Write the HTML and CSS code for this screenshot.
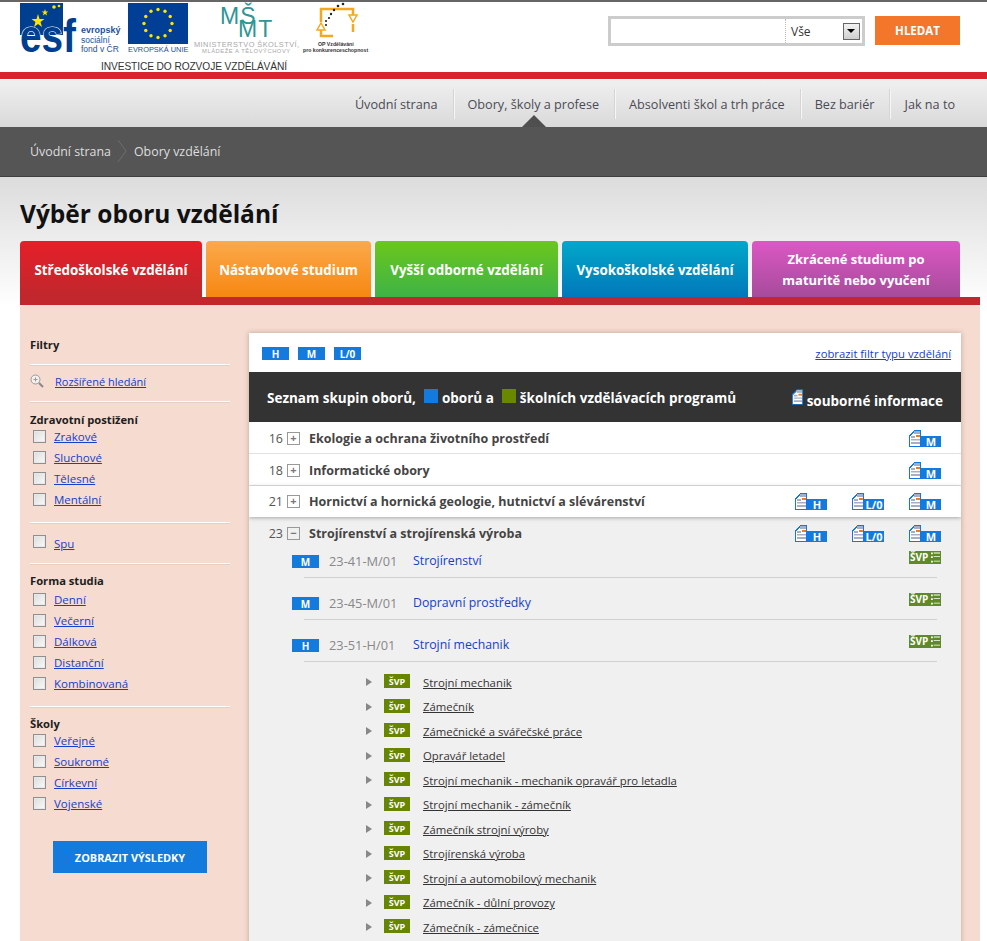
FILE: index.html
```html
<!DOCTYPE html>
<html lang="cs">
<head>
<meta charset="utf-8">
<title>Výběr oboru vzdělání</title>
<link rel="stylesheet" href="styles.css">
</head>
<body>
<svg class="defs" width="0" height="0" aria-hidden="true">
  <symbol id="doc" viewBox="0 0 12 17">
    <path d="M0 17V5h1V4h1V3h1V2h1V1h1V0h7v17z" fill="#1278dc"/>
    <path d="M1 16V6h1V5h1V4h1V3h1V1h6v15z" fill="#fff"/>
    <path d="M5 1h6v3H5z" fill="#a9afc0"/>
    <path d="M7 5h4v2H7z" fill="#f47a20"/>
    <path d="M2 6h4v2H2zM2 9h9v1.500H2zM2 12h9v2H2z" fill="#a9afc0"/>
  </symbol>
  <symbol id="lst" viewBox="0 0 10 11">
    <path d="M0 0h2v2H0zM3 0h7v1H3zM0 4h2v2H0zM3 4h7v1H3zM0 9h2v2H0zM3 9h7v1H3z" fill="#fff"/>
  </symbol>
</svg>

<header class="top">
  <svg class="logos" width="350" height="70" viewBox="20 2 350 70" role="img">
    <rect x="20" y="3" width="43" height="32" fill="#003f8f"/>
    <path d="M38 14l1.500 5 5 0-4 3 1.500 5-4-3-4 3 1.500-5-4-3 5 0z" fill="#ffe500"/>
    <path d="M45 9l.8 2.500h2.500l-2 1.500.8 2.500-2.100-1.500-2.100 1.500.8-2.500-2-1.500h2.500z" fill="#ffe500"/>
    <circle cx="54" cy="7" r="1.800" fill="#ffe500"/>
    <circle cx="59" cy="6" r="1.300" fill="#ffe500"/>
    <text class="esf" x="20" y="52" textLength="56" lengthAdjust="spacingAndGlyphs">esf</text>
    <text class="esf-t" x="81" y="33">evropský</text>
    <text class="esf-s" x="81" y="43">sociální</text>
    <text class="esf-s" x="81" y="52">fond v ČR</text>
    <rect x="128" y="3" width="60" height="41" fill="#003f95"/>
    <g fill="#ffe500">
      <circle cx="158" cy="9.500" r="1.700"/><circle cx="165" cy="11.300" r="1.700"/><circle cx="170.200" cy="16.500" r="1.700"/>
      <circle cx="172" cy="23.500" r="1.700"/><circle cx="170.200" cy="30.500" r="1.700"/><circle cx="165" cy="35.700" r="1.700"/>
      <circle cx="158" cy="37.500" r="1.700"/><circle cx="151" cy="35.700" r="1.700"/><circle cx="145.800" cy="30.500" r="1.700"/>
      <circle cx="144" cy="23.500" r="1.700"/><circle cx="145.800" cy="16.500" r="1.700"/><circle cx="151" cy="11.300" r="1.700"/>
    </g>
    <text class="eu" x="128" y="52">EVROPSKÁ UNIE</text>
    <text class="ms" x="220" y="24">MŠ</text>
    <text class="ms" x="238" y="37">MT</text>
    <text class="min" x="194" y="47">MINISTERSTVO ŠKOLSTVÍ,</text>
    <text class="min2" x="202" y="53">MLÁDEŽE A TĚLOVÝCHOVY</text>
    <path d="M321 22V9h32v6M353 24v8M333 36H321v-6" fill="none" stroke="#f5a81c" stroke-width="2.500"/>
    <path d="M349 15h8l-4 7zM317 30l4-7 4 7z" fill="#fff" stroke="#f5a81c" stroke-width="1.500"/>
    <g fill="#222">
      <circle cx="343" cy="4" r="1.300"/><circle cx="338" cy="6" r="1.300"/><circle cx="334" cy="10" r="1.200"/>
      <circle cx="331" cy="14" r="1.200"/><circle cx="329" cy="18" r="1.100"/><circle cx="326" cy="21" r="1.100"/><circle cx="326" cy="25" r="1.100"/>
    </g>
    <text class="op" x="318" y="46">OP Vzdělávání</text>
    <text class="op" x="303" y="52">pro konkurenceschopnost</text>
    <text class="inv" x="101" y="70">INVESTICE DO ROZVOJE VZDĚLÁVÁNÍ</text>
  </svg>
  <form class="search">
    <div class="search-box">
      <input class="search-input" type="text" aria-label="Hledat">
      <div class="search-select">
        <span>Vše</span>
        <span class="search-arrow"></span>
      </div>
    </div>
    <button class="search-btn" type="button">HLEDAT</button>
  </form>
</header>

<div class="redline"></div>

<nav class="nav">
  <a class="nav-item">Úvodní strana</a>
  <a class="nav-item nav-active">Obory, školy a profese</a>
  <a class="nav-item">Absolventi škol a trh práce</a>
  <a class="nav-item">Bez bariér</a>
  <a class="nav-item">Jak na to</a>
</nav>

<div class="crumbs">
  <span>Úvodní strana</span>
  <svg class="crumb-sep" width="10" height="24" viewBox="0 0 10 24"><path d="M1 1l8 11-8 11" fill="none" stroke="#6e6e6e"/></svg>
  <span>Obory vzdělání</span>
</div>

<main class="page">
  <h1 class="title">Výběr oboru vzdělání</h1>

  <div class="tabs">
    <a class="tab tab-red">Středoškolské vzdělání</a>
    <a class="tab tab-orange">Nástavbové studium</a>
    <a class="tab tab-green">Vyšší odborné vzdělání</a>
    <a class="tab tab-blue">Vysokoškolské vzdělání</a>
    <a class="tab tab-purple">Zkrácené studium po<br>maturitě nebo vyučení</a>
  </div>

  <div class="panel">
    <aside class="filters">
      <section class="f-sec f-first"><h3 class="f-h">Filtry</h3></section>
      <section class="f-sec f-search">
        <svg width="14" height="14" viewBox="0 0 14 14"><circle cx="5.500" cy="5.500" r="4.500" fill="#f5f0ec" stroke="#999"/><path d="M3.500 5.500h4M5.500 3.500v4" stroke="#999"/><path d="M9 9l4 4" stroke="#888" stroke-width="2"/></svg>
        <a class="f-link">Rozšířené hledání</a>
      </section>
      <section class="f-sec f-health">
        <h3 class="f-h">Zdravotní postižení</h3>
        <label class="f-item"><input class="cb" type="checkbox"><a class="f-link">Zrakové</a></label>
        <label class="f-item"><input class="cb" type="checkbox"><a class="f-link">Sluchové</a></label>
        <label class="f-item"><input class="cb" type="checkbox"><a class="f-link">Tělesné</a></label>
        <label class="f-item"><input class="cb" type="checkbox"><a class="f-link">Mentální</a></label>
      </section>
      <section class="f-sec f-spu">
        <label class="f-item f-item-spu"><input class="cb" type="checkbox"><a class="f-link">Spu</a></label>
      </section>
      <section class="f-sec f-form">
        <h3 class="f-h">Forma studia</h3>
        <label class="f-item"><input class="cb" type="checkbox"><a class="f-link">Denní</a></label>
        <label class="f-item"><input class="cb" type="checkbox"><a class="f-link">Večerní</a></label>
        <label class="f-item"><input class="cb" type="checkbox"><a class="f-link">Dálková</a></label>
        <label class="f-item"><input class="cb" type="checkbox"><a class="f-link">Distanční</a></label>
        <label class="f-item"><input class="cb" type="checkbox"><a class="f-link">Kombinovaná</a></label>
      </section>
      <section class="f-sec f-last">
        <h3 class="f-h">Školy</h3>
        <label class="f-item"><input class="cb" type="checkbox"><a class="f-link">Veřejné</a></label>
        <label class="f-item"><input class="cb" type="checkbox"><a class="f-link">Soukromé</a></label>
        <label class="f-item"><input class="cb" type="checkbox"><a class="f-link">Církevní</a></label>
        <label class="f-item"><input class="cb" type="checkbox"><a class="f-link">Vojenské</a></label>
      </section>
      <button class="show-btn" type="button">ZOBRAZIT VÝSLEDKY</button>
    </aside>

    <section class="card">
      <div class="card-top">
        <div class="legend">
          <span class="tag">H</span><span class="tag">M</span><span class="tag">L/0</span>
        </div>
        <a class="filter-link">zobrazit filtr typu vzdělání</a>
      </div>
      <div class="card-head">
        <div class="head-left">
          <span>Seznam skupin oborů,</span>
          <i class="sq sq-blue"></i><span>oborů a</span>
          <i class="sq sq-green"></i><span>školních vzdělávacích programů</span>
        </div>
        <div class="head-right">
          <svg class="head-doc" width="11" height="16"><use href="#doc"/></svg>
          <span>souborné informace</span>
        </div>
      </div>

      <div class="grp">
        <span class="num">16</span><span class="tog">+</span><b class="grp-t">Ekologie a ochrana životního prostředí</b>
        <div class="infos"><span class="info"><svg class="doc"><use href="#doc"/></svg><b>M</b></span></div>
      </div>
      <div class="grp">
        <span class="num">18</span><span class="tog">+</span><b class="grp-t">Informatické obory</b>
        <div class="infos"><span class="info"><svg class="doc"><use href="#doc"/></svg><b>M</b></span></div>
      </div>
      <div class="grp grp-last">
        <span class="num">21</span><span class="tog">+</span><b class="grp-t">Hornictví a hornická geologie, hutnictví a slévárenství</b>
        <div class="infos">
          <span class="info"><svg class="doc"><use href="#doc"/></svg><b>H</b></span>
          <span class="info"><svg class="doc"><use href="#doc"/></svg><b>L/0</b></span>
          <span class="info"><svg class="doc"><use href="#doc"/></svg><b>M</b></span>
        </div>
      </div>

      <div class="open">
        <div class="grp grp-open">
          <span class="num">23</span><span class="tog">−</span><b class="grp-t">Strojírenství a strojírenská výroba</b>
          <div class="infos">
            <span class="info"><svg class="doc"><use href="#doc"/></svg><b>H</b></span>
            <span class="info"><svg class="doc"><use href="#doc"/></svg><b>L/0</b></span>
            <span class="info"><svg class="doc"><use href="#doc"/></svg><b>M</b></span>
          </div>
        </div>

        <div class="obor">
          <span class="tag">M</span><span class="code">23-41-M/01</span><a class="obor-t">Strojírenství</a>
          <span class="svp-l">ŠVP<svg width="9" height="11"><use href="#lst"/></svg></span>
        </div>
        <div class="obor">
          <span class="tag">M</span><span class="code">23-45-M/01</span><a class="obor-t">Dopravní prostředky</a>
          <span class="svp-l">ŠVP<svg width="9" height="11"><use href="#lst"/></svg></span>
        </div>
        <div class="obor">
          <span class="tag">H</span><span class="code">23-51-H/01</span><a class="obor-t">Strojní mechanik</a>
          <span class="svp-l">ŠVP<svg width="9" height="11"><use href="#lst"/></svg></span>
        </div>

        <ul class="svps">
          <li class="svp"><i class="arr"></i><span class="svp-t">ŠVP</span><a class="svp-a">Strojní mechanik</a></li>
          <li class="svp"><i class="arr"></i><span class="svp-t">ŠVP</span><a class="svp-a">Zámečník</a></li>
          <li class="svp"><i class="arr"></i><span class="svp-t">ŠVP</span><a class="svp-a">Zámečnické a svářečské práce</a></li>
          <li class="svp"><i class="arr"></i><span class="svp-t">ŠVP</span><a class="svp-a">Opravář letadel</a></li>
          <li class="svp"><i class="arr"></i><span class="svp-t">ŠVP</span><a class="svp-a">Strojní mechanik - mechanik opravář pro letadla</a></li>
          <li class="svp"><i class="arr"></i><span class="svp-t">ŠVP</span><a class="svp-a">Strojní mechanik - zámečník</a></li>
          <li class="svp"><i class="arr"></i><span class="svp-t">ŠVP</span><a class="svp-a">Zámečník strojní výroby</a></li>
          <li class="svp"><i class="arr"></i><span class="svp-t">ŠVP</span><a class="svp-a">Strojírenská výroba</a></li>
          <li class="svp"><i class="arr"></i><span class="svp-t">ŠVP</span><a class="svp-a">Strojní a automobilový mechanik</a></li>
          <li class="svp"><i class="arr"></i><span class="svp-t">ŠVP</span><a class="svp-a">Zámečník - důlní provozy</a></li>
          <li class="svp"><i class="arr"></i><span class="svp-t">ŠVP</span><a class="svp-a">Zámečník - zámečnice</a></li>
        </ul>
      </div>
    </section>
  </div>
</main>
</body>
</html>
```

FILE: styles.css
```css
* { box-sizing: border-box; }
html, body { height: 100vh; overflow: hidden; }
body {
  margin: 0;
  font-family: "Open Sans", "Noto Sans", sans-serif;
  font-size: 12px;
  color: #333;
  background: #fff;
}
.defs { display: block; height: 0; }
a { text-decoration: none; }

/* header */
.top {
  height: 72px;
  border-top: 2px solid #666;
  display: flex;
  justify-content: space-between;
  padding: 0 27px 0 20px;
}
.logos { display: block; }
.logos text { font-family: "Liberation Sans", sans-serif; }
.logos .esf { font-size: 46px; font-weight: 700; fill: #003f8f; stroke: #fff; stroke-width: 1.200px; paint-order: stroke; }
.logos .esf-t { font-size: 9px; font-weight: 700; fill: #1d4f9c; }
.logos .esf-s { font-size: 8.500px; fill: #1d4f9c; }
.logos .eu { font-size: 7.400px; fill: #1d4f9c; }
.logos .ms { font-size: 23px; fill: #2f9597; letter-spacing: 1px; }
.logos .min { font-size: 7.400px; fill: #a8a8a8; letter-spacing: .45px; }
.logos .min2 { font-size: 5.800px; fill: #a8a8a8; letter-spacing: .55px; }
.logos .op { font-size: 5.200px; font-weight: 700; fill: #333; }
.logos .inv { font-size: 10.200px; fill: #333; letter-spacing: -.1px; }

.search { display: flex; gap: 10px; padding-top: 14px; height: 45px; box-sizing: content-box; }
.search-box {
  width: 257px;
  height: 30px;
  border: 3px solid #ccc;
  display: flex;
  background: #fff;
}
.search-input { width: 174px; border: 0; padding: 0; background: transparent; outline: 0; }
.search-select {
  flex: 1;
  border-left: 1px dotted #bbb;
  display: flex;
  align-items: center;
  justify-content: space-between;
  padding: 0 2px 0 5px;
  font-size: 12px;
  color: #333;
}
.search-arrow {
  width: 17px;
  height: 17px;
  border: 1px solid #666;
  background: linear-gradient(#f2f2f2, #cfcfcf);
  position: relative;
}
.search-arrow::after {
  content: "";
  position: absolute;
  left: 3px;
  top: 5px;
  border: 4px solid transparent;
  border-top: 4px solid #000;
}
.search-btn {
  width: 85px;
  height: 29px;
  border: 0;
  padding: 0;
  background: #f4762a;
  color: #fff;
  font: 700 11.500px "Open Sans", sans-serif;
}

.redline { height: 8px; background: #d9232d; border-bottom: 1px solid #fff; }

/* nav */
.nav {
  height: 47px;
  background: linear-gradient(#f0f0f0, #d9d9d9);
  display: flex;
  justify-content: flex-end;
  padding: 9px 17px 0 0;
}
.nav-item {
  height: 30px;
  padding: 0 15px 0 14px;
  display: flex;
  align-items: center;
  color: #4b4b55;
  font-size: 12.650px;
  position: relative;
  border-left: 1px solid #d5d5d5;
  box-shadow: inset 1px 0 0 #f6f6f6;
}
.nav-item:first-child { border-left: 0; box-shadow: none; }
.nav-active::after {
  content: "";
  position: absolute;
  left: 50%;
  bottom: -8px;
  margin-left: -12px;
  border: 12px solid transparent;
  border-top: 0;
  border-bottom: 12px solid #4f4f4f;
}

.crumbs {
  height: 50px;
  background: #555;
  border-bottom: 1px solid #3e3e3e;
  display: flex;
  align-items: center;
  gap: 6.500px;
  padding: 0 0 1px 30px;
  color: #dedede;
  font-size: 12.400px;
}

/* page */
.page {
  padding: 1px 0 0 20px;
  background: linear-gradient(#dcdcdc, #fff 130px) no-repeat;
}
.title {
  margin: 20px 0 11px;
  height: 32px;
  line-height: 32px;
  font-size: 24.500px;
  font-weight: 700;
  color: #111;
}
.tabs { display: flex; gap: 4px; }
.tab {
  height: 56px;
  padding-top: 2px;
  border-radius: 4px 4px 0 0;
  display: flex;
  align-items: center;
  justify-content: center;
  text-align: center;
  color: #fff;
  font-weight: 700;
  font-size: 13.400px;
  line-height: 21px;
}
.tab-red { width: 182px; background: linear-gradient(#e61f29, #c0272d); }
.tab-orange { width: 165px; background: linear-gradient(#fba94b, #f68712); }
.tab-green { width: 183px; background: linear-gradient(#6cc71c, #3eb346); }
.tab-blue { width: 186px; background: linear-gradient(#02a8c9, #0178bb); }
.tab-purple { width: 208px; font-size: 13px; background: linear-gradient(#dc58c4, #a64b9b); }

.panel {
  width: 960px;
  height: 644px;
  background: #f5dbd0;
  border-top: 8px solid #c1272d;
  display: flex;
  padding: 28px 19px 0 10px;
  gap: 19px;
}

/* filters */
.filters { width: 200px; flex: none; }
.f-sec { border-bottom: 1px solid #fff; box-shadow: 0 1px 0 #e4cfc5; padding: 9px 0 12px; }
.f-sec.f-first { padding: 4px 0 13px; }
.f-sec.f-search { padding: 7px 0 11px; display: flex; align-items: center; gap: 11px; height: 37px; }
.f-sec.f-health { padding-top: 10px; }
.f-sec.f-spu { padding: 7px 0 5px; }
.f-sec.f-last { border: 0; box-shadow: none; padding-bottom: 0; }
.f-h { margin: 0; font-size: 11.200px; font-weight: 700; color: #1d1d1d; line-height: 16px; height: 14px; }
.f-form .f-h { height: 16px; }
.f-link { color: #1540c8; text-decoration: underline; font-size: 11.500px; }
.f-search .f-link { font-size: 11px; }
.f-item { display: flex; align-items: center; gap: 8px; height: 21px; padding-left: 3px; }
.f-item-spu { height: 28px; }
.f-item-spu .cb { margin-bottom: 6px; }
.f-item-spu .f-link { margin-bottom: 2px; }
.cb {
  appearance: none;
  width: 13px;
  height: 13px;
  margin: 0;
  border: 1px solid #8f8f8f;
  background: linear-gradient(135deg, #dcdcdc, #fafafa);
  box-shadow: inset 0 0 0 1px #e8e8e8;
}
.show-btn {
  display: block;
  width: 154px;
  height: 32px;
  margin: 27px 0 0 23px;
  border: 0;
  padding: 0;
  background: #127bdd;
  color: #fff;
  font: 700 10.900px "Open Sans", sans-serif;
}

/* card */
.card {
  width: 712px;
  height: 640px;
  background: #fff;
  box-shadow: 0 0 5px rgba(120, 80, 60, .4);
  overflow: hidden;
}
.card-top {
  height: 39px;
  display: flex;
  justify-content: space-between;
  align-items: center;
  padding: 1px 10px 0 13px;
}
.legend { display: flex; gap: 9px; }
.tag {
  width: 27px;
  height: 13px;
  background: #127bdd;
  color: #fff;
  font-weight: 700;
  font-size: 10px;
  line-height: 14px;
  text-align: center;
  flex: none;
}
.filter-link { color: #1540c8; text-decoration: underline; font-size: 11.300px; }
.card-head {
  height: 50px;
  background: #333;
  color: #fff;
  font-weight: 700;
  font-size: 13.500px;
  display: flex;
  justify-content: space-between;
  align-items: center;
  padding: 1px 18px 0 18px;
}
.head-left { display: flex; align-items: center; }
.sq { width: 14px; height: 14px; margin: -3px 4px 0 8px; }
.sq-blue { background: #127bdd; }
.sq-green { background: #6a8700; }
.head-right { display: flex; align-items: flex-end; gap: 4px; margin-top: 4px; }
.head-doc { margin-bottom: 5px; }

.grp {
  height: 32px;
  display: flex;
  align-items: center;
  padding: 1px 20px 0 19px;
  border-bottom: 1px solid #e1e1e1;
  font-size: 12.500px;
}
.grp-last { height: 31px; padding-top: 0; border: 0; position: relative; box-shadow: 0 1px 4px rgba(0, 0, 0, .3); }
.num { width: 15px; color: #555; text-align: right; font-size: 12.500px; }
.tog {
  width: 13px;
  height: 13px;
  margin: 0 9px 0 4px;
  border: 1px solid #999;
  color: #777;
  font-size: 11px;
  line-height: 10px;
  text-align: center;
  font-weight: 700;
  flex: none;
}
.grp-t { color: #444; }
.infos { margin-left: auto; display: flex; gap: 25px; }
.info { width: 32px; height: 17px; display: flex; align-items: flex-end; }
.doc { width: 12px; height: 17px; flex: none; }
.info b {
  flex: 1;
  height: 11px;
  background: #127bdd;
  color: #fff;
  font-size: 11px;
  line-height: 12px;
  text-align: center;
}

.open { background: #f0f0f0; height: 425px; }
.grp-open { border: 0; height: 32px; padding-top: 0; }
.obor {
  height: 42px;
  margin-left: 43px;
  padding-top: 0;
  display: flex;
  align-items: flex-start;
  position: relative;
}
.obor .tag { margin-top: 6px; }
.obor::after {
  content: "";
  position: absolute;
  left: 12px;
  right: 24px;
  top: 28px;
  border-top: 1px solid #d0d0d0;
}
.code { margin: 3px 0 0 10px; width: 84px; color: #888; font-size: 12.800px; }
.obor-t { margin-top: 3px; color: #1540c8; font-size: 12.300px; }
.svp-l {
  margin: 2px 20px 0 auto;
  width: 32px;
  height: 13px;
  background: #5f8a2a;
  color: #fff;
  font-size: 10px;
  font-weight: 700;
  line-height: 13px;
  display: flex;
  justify-content: space-between;
  align-items: center;
  padding: 0 1px 0 1px;
}
.svps { list-style: none; margin: 0; padding: 0 0 0 117px; position: relative; top: -5px; }
.svp { height: 24.500px; display: flex; align-items: center; }
.arr {
  width: 0;
  height: 0;
  border: 4px solid transparent;
  border-left: 6px solid #888;
  border-right: 0;
  margin-right: 12px;
}
.svp-t {
  width: 26px;
  height: 14px;
  background: #678500;
  color: #fff;
  font-size: 9px;
  font-weight: 700;
  line-height: 15px;
  text-align: center;
  margin: 0 13px 2px 0;
}
.svp-a { color: #333; text-decoration: underline; font-size: 11.350px; }
```
